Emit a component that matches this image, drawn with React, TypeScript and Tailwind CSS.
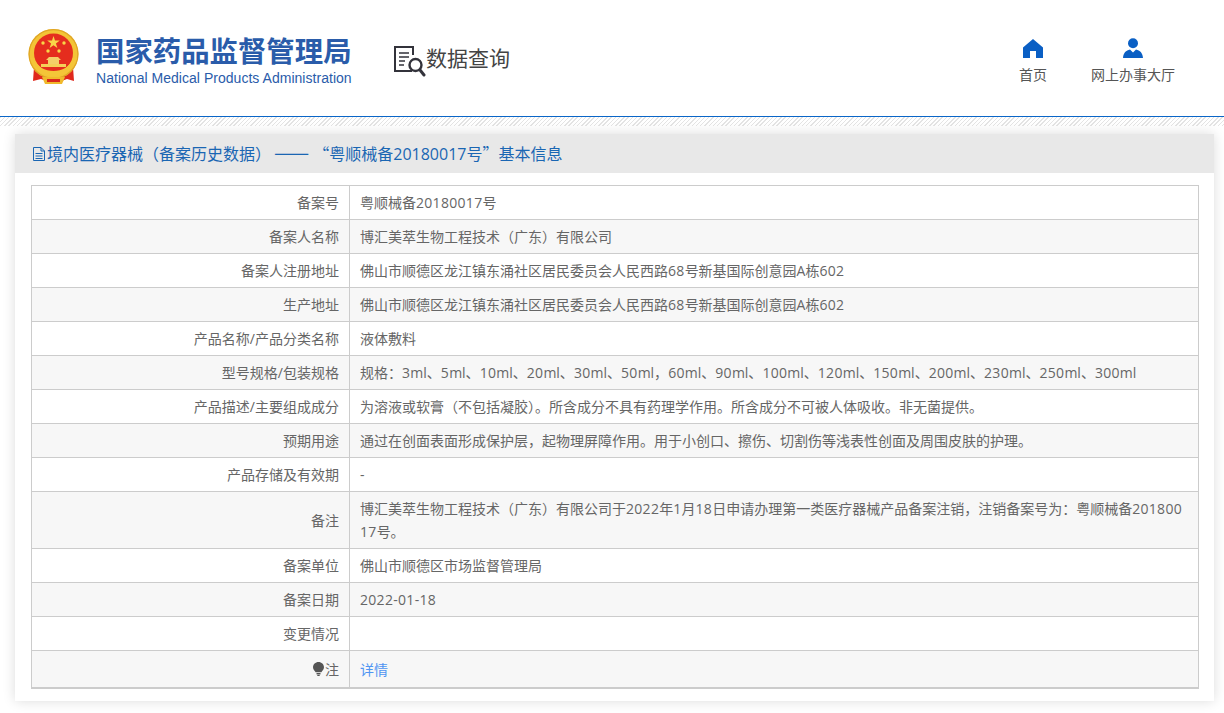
const rows: { label: string; value: string; tall?: boolean }[] = [
  { label: "备案号", value: "粤顺械备20180017号" },
  { label: "备案人名称", value: "博汇美萃生物工程技术（广东）有限公司" },
  { label: "备案人注册地址", value: "佛山市顺德区龙江镇东涌社区居民委员会人民西路68号新基国际创意园A栋602" },
  { label: "生产地址", value: "佛山市顺德区龙江镇东涌社区居民委员会人民西路68号新基国际创意园A栋602" },
  { label: "产品名称/产品分类名称", value: "液体敷料" },
  { label: "型号规格/包装规格", value: "规格：3ml、5ml、10ml、20ml、30ml、50ml，60ml、90ml、100ml、120ml、150ml、200ml、230ml、250ml、300ml" },
  { label: "产品描述/主要组成成分", value: "为溶液或软膏（不包括凝胶）。所含成分不具有药理学作用。所含成分不可被人体吸收。非无菌提供。" },
  { label: "预期用途", value: "通过在创面表面形成保护层，起物理屏障作用。用于小创口、擦伤、切割伤等浅表性创面及周围皮肤的护理。" },
  { label: "产品存储及有效期", value: "-" },
  {
    label: "备注",
    value: "博汇美萃生物工程技术（广东）有限公司于2022年1月18日申请办理第一类医疗器械产品备案注销，注销备案号为：粤顺械备20180017号。",
    tall: true,
  },
  { label: "备案单位", value: "佛山市顺德区市场监督管理局" },
  { label: "备案日期", value: "2022-01-18" },
  { label: "变更情况", value: "" },
]

// digits sit a little wider in the original
function Value({ text }: { text: string }) {
  return (
    <>
      {text.split(/([0-9-]+)/).map((part, i) =>
        i % 2 === 1 ? (
          <span key={i} className="tracking-[0.3px]">
            {part}
          </span>
        ) : (
          part
        ),
      )}
    </>
  )
}

function Emblem() {
  return (
    <svg width="54" height="56" viewBox="0 0 54 56" className="shrink-0">
      <path d="M7 38 L6 52 L14 50 L27 55 L40 50 L47 52 L46 38 Z" fill="#e0281c" />
      <circle cx="26.5" cy="25" r="25" fill="#f3c436" />
      <circle cx="26.5" cy="25" r="24.4" fill="none" stroke="#e0a526" strokeWidth="1.2" />
      <circle cx="26.5" cy="24" r="19.5" fill="#e52d1e" />
      <polygon points="26.5,7 28,11.6 32.8,11.6 28.9,14.4 30.4,19 26.5,16.2 22.6,19 24.1,14.4 20.2,11.6 25,11.6" fill="#f8d648" />
      <circle cx="16" cy="14" r="1.7" fill="#f8d648" />
      <circle cx="37" cy="14" r="1.7" fill="#f8d648" />
      <circle cx="21" cy="22" r="1.7" fill="#f8d648" />
      <circle cx="32" cy="22" r="1.7" fill="#f8d648" />
      <path d="M19 31 L22 28 H31 L34 31 H32 V35 H21 V31 Z" fill="#f4cf68" />
      <rect x="14" y="35" width="25" height="3" fill="#f5cf58" />
      <path d="M3 29 C7 43 17 47 26.5 47 C36 47 46 43 50 29 L46 29 C43 38 35 42 26.5 42 C18 42 10 38 7 29 Z" fill="#f4c538" />
      <path d="M15 48 H38 L35 55 H18 Z" fill="#f0b92c" />
      <rect x="20" y="50" width="13" height="3" fill="#d9281c" />
    </svg>
  )
}

function SearchDoc() {
  return (
    <svg width="33" height="33" viewBox="0 0 33 33" fill="none" stroke="#33333b" className="shrink-0">
      <path d="M19 26 H2 V2 H20 V10" strokeWidth="2" />
      <path d="M6 8 H16 M6 12 H16 M6 16 H12 M6 20 H11" strokeWidth="1.6" />
      <circle cx="22.5" cy="20" r="6" strokeWidth="2.4" />
      <path d="M27 25 L31 30" strokeWidth="3" strokeLinecap="round" />
    </svg>
  )
}

function HomeIcon() {
  return (
    <svg width="20" height="19" viewBox="0 0 20 19" fill="#0a5fc4">
      <path d="M10 0 L20 8.5 V19 H13 V12 H7 V19 H0 V8.5 Z" />
    </svg>
  )
}

function UserIcon() {
  return (
    <svg width="20" height="21" viewBox="0 0 20 21" fill="#0a5fc4">
      <circle cx="10" cy="5.2" r="5" />
      <path d="M0 20 C0.5 14.5 3 12.5 7 11.5 L10 14.5 L13 11.5 C17 12.5 19.5 14.5 20 20 Z" />
    </svg>
  )
}

function DocIcon() {
  return (
    <svg width="14" height="14" viewBox="0 0 14 14" fill="none" stroke="#1a66b3" className="mr-px shrink-0">
      <path d="M1.5 0.5 H9 L12.5 4 V13.5 H1.5 Z M9 0.5 V4 H12.5 M3.5 6.5 H10.5 M3.5 9 H10.5 M3.5 11.5 H10.5" strokeWidth="1" />
    </svg>
  )
}

function BulbIcon() {
  return (
    <svg width="11" height="14" viewBox="0 0 11 14" fill="#555" className="shrink-0">
      <path d="M5.5 0 C8.6 0 11 2.3 11 5.2 C11 7.4 9.4 8.6 8.4 10.2 H2.6 C1.6 8.6 0 7.4 0 5.2 C0 2.3 2.4 0 5.5 0 Z" />
      <rect x="3.5" y="11" width="4" height="1.4" />
      <rect x="4.3" y="12.8" width="2.4" height="1.2" />
    </svg>
  )
}

export default function App() {
  return (
    <div className="min-h-[713px] bg-white font-['Open_Sans','Noto_Sans_CJK_SC',sans-serif] text-[14px] text-[#666]">
      <header className="flex h-[116px] items-start bg-white pl-[27px]">
        <div className="mt-[29px]">
          <Emblem />
        </div>
        <div className="ml-[15px] mt-[32px] w-[256px]">
          <div className="whitespace-nowrap text-[28.4px] font-bold leading-[38px] text-[#2a5caa]">国家药品监督管理局</div>
          <div className="whitespace-nowrap font-['Liberation_Sans',sans-serif] text-[14px] leading-[17px] tracking-[0.03px] text-[#2a5caa]">
            National Medical Products Administration
          </div>
        </div>
        <div className="ml-[41px] mt-[45px] flex items-start">
          <SearchDoc />
          <span className="mt-[-3px] whitespace-nowrap text-[21px] leading-[32px] text-[#444]">数据查询</span>
        </div>
        <nav className="ml-auto mr-[49px] mt-[38px] flex">
          <a className="flex w-[30px] flex-col items-center pt-px">
            <HomeIcon />
            <span className="mt-[8px] whitespace-nowrap leading-[18px] text-[#555]">首页</span>
          </a>
          <a className="ml-[43px] flex w-[84px] flex-col items-center">
            <UserIcon />
            <span className="mt-[7px] whitespace-nowrap leading-[18px] text-[#555]">网上办事大厅</span>
          </a>
        </nav>
      </header>
      <div className="h-[10px] border-t border-[#0a66c8] bg-[repeating-linear-gradient(135deg,#e4e4e4_0px,#e4e4e4_1px,#ffffff_1px,#ffffff_3px)]" />
      <main className="pl-[15px] pr-[10px] pt-[8px]">
        <section className="bg-white shadow-[0_0_12px_rgba(0,0,0,0.14)]">
          <h2 className="flex h-[39px] items-center whitespace-nowrap bg-[#e8e8e8] pl-[17px] text-[16px] font-normal text-[#1a66b3]">
            <DocIcon />
            <span>
              境内医疗器械（备案历史数据）
              <span className="ml-[3px] mr-[4px] font-['Noto_Sans_CJK_SC'] text-[21px] leading-none">——</span>
              <span className="font-['Noto_Sans_CJK_SC']">“</span>粤顺械备20180017号
              <span className="font-['Noto_Sans_CJK_SC']">”</span>基本信息
            </span>
          </h2>
          <div className="pb-[12px] pl-[16px] pr-[15px] pt-[12px]">
            <div className="border border-b-2 border-[#ccc]">
              {rows.map((row, i) => (
                <div key={row.label} className={`flex border-b border-[#ccc] ${i % 2 === 1 ? "bg-[#f7f7f7]" : "bg-white"} ${row.tall ? "h-[57px]" : "h-[34px]"}`}>
                  <div className="flex w-[318px] shrink-0 items-center justify-end border-r border-[#ccc] pr-[10px]">
                    <Value text={row.label} />
                  </div>
                  <div className="flex-1 break-all px-[10px] py-[5px] leading-[23px]">
                    <Value text={row.value} />
                  </div>
                </div>
              ))}
              <div className="flex h-[36px] bg-[#f7f7f7]">
                <div className="flex w-[318px] shrink-0 items-center justify-end border-r border-[#ccc] pr-[10px]">
                  <BulbIcon />
                  <span className="ml-px">注</span>
                </div>
                <div className="flex items-center px-[10px] text-[#4f95f2]">详情</div>
              </div>
            </div>
          </div>
        </section>
      </main>
    </div>
  )
}
